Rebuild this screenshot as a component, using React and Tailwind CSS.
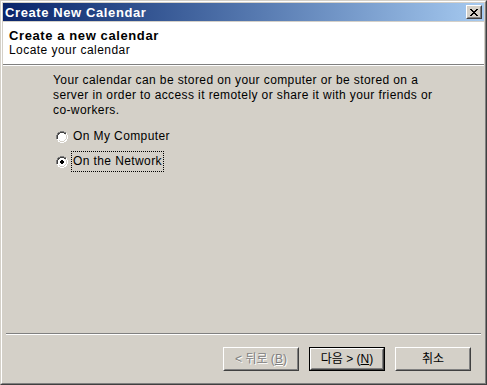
import React from "react";

function Radio({ checked }) {
  return (
    <svg width="12" height="12" viewBox="0 0 12 12" shapeRendering="crispEdges">
      <circle cx="6" cy="6" r="5.5" fill="#ffffff" />
      <path d="M4 0h4v1H4zM2 1h2v1H2zM8 1h2v1H8zM1 2h1v2H1zM0 4h1v4H0z" fill="#808080" />
      <path d="M4 1h4v1H4zM2 2h2v1H2zM8 2h2v1H8zM2 3h1v1H2zM1 4h1v4H1z" fill="#404040" />
      <path d="M10 2h1v2h-1zM11 4h1v4h-1zM10 8h1v2h-1zM8 10h2v1H8zM4 11h4v1H4zM2 10h2v1H2z" fill="#ffffff" />
      <path d="M9 3h1v1H9zM10 4h1v4h-1zM9 8h1v1H9zM8 9h1v1H8zM4 10h4v1H4zM3 9h1v1H3z" fill="#d4d0c8" />
      {checked && <path d="M5 4h2v1h1v2H7v1H5V7H4V5h1z" fill="#000000" />}
    </svg>
  );
}

function Button({ children, isDefault }) {
  const inner = (
    <div className="h-full w-full border border-t-white border-l-white border-r-[#404040] border-b-[#404040]">
      <div className="flex h-full w-full items-center justify-center border border-t-[#d4d0c8] border-l-[#d4d0c8] border-r-[#808080] border-b-[#808080]">
        {children}
      </div>
    </div>
  );
  if (isDefault) {
    return <div className="h-[24px] w-[76px] border border-black">{inner}</div>;
  }
  return <div className="h-[24px] w-[76px]">{inner}</div>;
}

export default function App() {
  return (
    <div
      className="h-[385px] w-[487px] bg-[#d4d0c8] text-[12px] leading-[15px] text-black"
      style={{ fontFamily: '"Liberation Sans", "Noto Sans CJK KR", sans-serif' }}
    >
      <div className="h-full w-full border border-t-[#d4d0c8] border-l-[#d4d0c8] border-r-[#404040] border-b-[#404040]">
        <div className="flex h-full w-full flex-col border border-t-white border-l-white border-r-[#808080] border-b-[#808080] p-px">
          {/* title bar */}
          <div className="flex h-[18px] items-center justify-between bg-gradient-to-r from-[#0a246a] to-[#a6caf0] pl-[2px] pr-[2px]">
            <span className="text-[13px] font-bold tracking-[0.6px] text-white">Create New Calendar</span>
            <div className="h-[14px] w-[16px] border border-t-white border-l-white border-r-[#404040] border-b-[#404040] bg-[#d4d0c8]">
              <div className="flex h-full w-full items-center justify-center border border-t-[#d4d0c8] border-l-[#d4d0c8] border-r-[#808080] border-b-[#808080]">
                <svg width="8" height="7" viewBox="0 0 8 7" shapeRendering="crispEdges">
                  <path d="M0 0h2v1h1v1h2V1h1V0h2v1H7v1H6v1H5v1h1v1h1v1h1v1H6V6H5V5H3v1H2v1H0V6h1V5h1V4h1V3H2V2H1V1H0z" fill="#000" />
                </svg>
              </div>
            </div>
          </div>
          {/* header */}
          <div className="mt-px flex h-[42px] flex-col bg-white pl-[6px] pt-[6px]">
            <div className="text-[13px] font-bold tracking-[0.6px]">Create a new calendar</div>
            <div className="tracking-[0.45px]">Locate your calendar</div>
          </div>
          <div className="h-px bg-[#808080]" />
          <div className="h-px bg-white" />
          {/* body */}
          <div className="flex flex-1 flex-col pl-[50px] pt-[7px]">
            <p className="w-[395px] tracking-[0.4px]">
              Your calendar can be stored on your computer or be stored on a
              server in order to access it remotely or share it with your friends or
              co-workers.
            </p>
            <div className="mt-[11px] flex items-center gap-[5px] pl-[3px]">
              <Radio />
              <span className="tracking-[0.4px]">On My Computer</span>
            </div>
            <div className="mt-[7px] flex items-center gap-[3px] pl-[3px]">
              <Radio checked />
              <span className="border border-dotted border-black px-px py-[2px] tracking-[0.4px]">On the Network</span>
            </div>
          </div>
          {/* bottom separator */}
          <div className="mx-[3px] h-px bg-[#808080]" />
          <div className="mx-[3px] h-px bg-white" />
          <div className="flex h-[47px] items-start justify-end gap-[10px] pr-[13px] pt-[12px]">
            <Button>
              <span className="text-[#808080] [text-shadow:1px_1px_0_#ffffff]">
                &lt; 뒤로 (<span className="underline">B</span>)
              </span>
            </Button>
            <Button isDefault>
              <span>
                다음 &gt; (<span className="underline">N</span>)
              </span>
            </Button>
            <Button>
              <span>취소</span>
            </Button>
          </div>
        </div>
      </div>
    </div>
  );
}
